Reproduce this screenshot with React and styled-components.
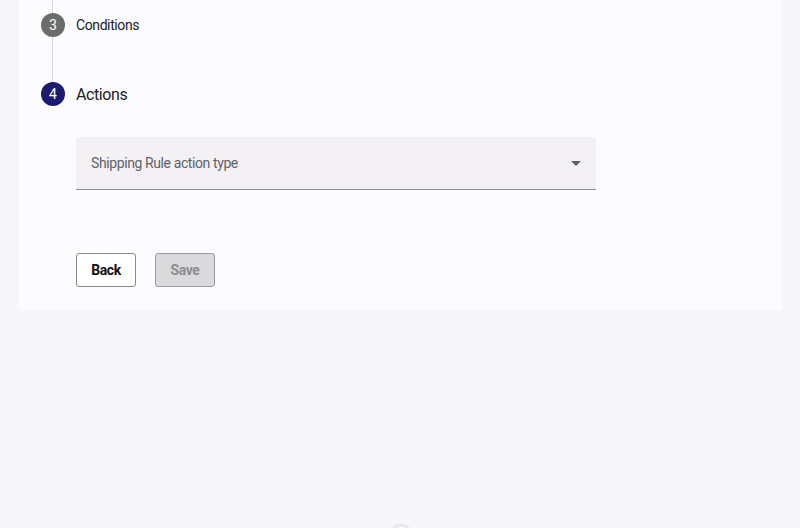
import React from 'react';
import styled, { createGlobalStyle } from 'styled-components';

const GlobalStyle = createGlobalStyle`
  html, body {
    margin: 0;
    padding: 0;
    background: #f7f6f8;
    font-family: Roboto, "Liberation Sans", Arial, sans-serif;
    letter-spacing: -0.4px;
    overflow: hidden;
  }
`;

const Page = styled.div`
  width: 800px;
  height: 528px;
  padding: 0 18px 0 19px;
  box-sizing: border-box;
  display: flex;
  flex-direction: column;
`;

const Card = styled.div`
  background: #fcfbfd;
  padding: 0 0 23px 22px;
`;

const Connector = styled.div`
  width: 1px;
  height: ${p => p.h}px;
  margin-left: 11px;
  background: #d3d2d6;
`;

const StepRow = styled.div`
  display: flex;
  align-items: center;
  height: 24px;
`;

const StepCircle = styled.div`
  width: 24px;
  height: 24px;
  border-radius: 50%;
  background: ${p => (p.active ? '#1b1c6f' : '#6c6c6c')};
  color: #fff;
  font-size: 14px;
  letter-spacing: 0;
  display: flex;
  align-items: center;
  justify-content: center;
  flex-shrink: 0;
`;

const StepLabel = styled.div`
  margin-left: 11px;
  color: #222125;
  font-size: ${p => (p.active ? '16px' : '14px')};
`;

const StepContent = styled.div`
  margin-left: 35px;
  padding-top: 31px;
`;

const Select = styled.div`
  width: 520px;
  height: 53px;
  box-sizing: border-box;
  background: #f3f1f4;
  border-radius: 4px 4px 0 0;
  border-bottom: 1px solid #8d8c90;
  display: flex;
  align-items: center;
  justify-content: space-between;
  padding: 0 15px;
  color: #626166;
  font-size: 14px;
`;

const Arrow = styled.div`
  width: 0;
  height: 0;
  border-left: 5px solid transparent;
  border-right: 5px solid transparent;
  border-top: 5px solid #5e5d62;
`;

const Buttons = styled.div`
  display: flex;
  gap: 19px;
  margin-top: 63px;
`;

const Button = styled.button`
  width: 60px;
  height: 34px;
  border-radius: 3px;
  border: 1px solid ${p => (p.disabled ? '#9a999d' : '#8a898d')};
  background: ${p => (p.disabled ? '#dad9dc' : '#fff')};
  color: ${p => (p.disabled ? '#8c8b8f' : '#111')};
  font-family: Roboto, "Liberation Sans", Arial, sans-serif;
  font-size: 14px;
  font-weight: 700;
  letter-spacing: -0.4px;
  padding: 0;
`;

const Spinner = styled.div`
  margin: auto auto 0;
  width: 20px;
  height: 20px;
  border-radius: 50%;
  border: 2px solid #e6e5e9;
  transform: translateY(20px);
`;

export default function App() {
  return (
    <Page>
      <GlobalStyle />
      <Card>
        <Connector h={13} />
        <StepRow>
          <StepCircle>3</StepCircle>
          <StepLabel>Conditions</StepLabel>
        </StepRow>
        <Connector h={45} />
        <StepRow>
          <StepCircle active>4</StepCircle>
          <StepLabel active>Actions</StepLabel>
        </StepRow>
        <StepContent>
          <Select>
            Shipping Rule action type
            <Arrow />
          </Select>
          <Buttons>
            <Button>Back</Button>
            <Button disabled>Save</Button>
          </Buttons>
        </StepContent>
      </Card>
      <Spinner />
    </Page>
  );
}
